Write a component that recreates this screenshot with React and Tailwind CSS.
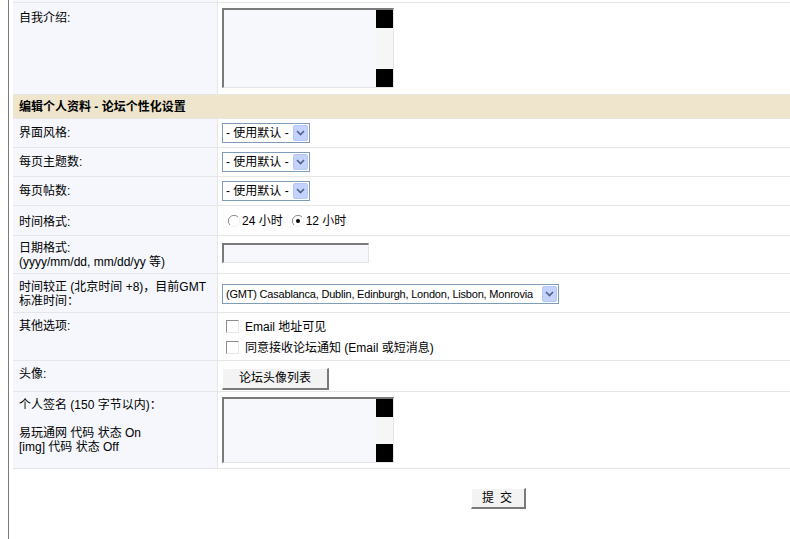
import React from 'react';

const font = { fontFamily: 'Tahoma, "Liberation Sans", "Noto Sans CJK SC", sans-serif' };

// === SMALL CLASSIC WIDGETS ===
const Select = ({ text, width, textClass = 'text-[12px]' }) => (
  <div className={`flex items-center h-[20px] border border-[#7f9db9] bg-white ${width}`}>
    <span className={`flex-1 min-w-0 overflow-hidden pl-[3px] whitespace-nowrap leading-none ${textClass}`}>{text}</span>
    <span className="flex items-center justify-center w-[15px] h-[16px] mr-[1px] rounded-[2px] bg-[#c3d3fd] border border-[#b4c8f6]">
      <svg width="9" height="6" viewBox="0 0 9 6">
        <path d="M1 1 L4.5 4.5 L8 1" fill="none" stroke="#4d6185" strokeWidth="1.6" />
      </svg>
    </span>
  </div>
);

const TextArea = ({ height }) => (
  <div className={`flex w-[172px] ${height} border-t-2 border-l-2 border-[#7a7a7a] border-b border-r border-b-[#e4e4e4] border-r-[#e4e4e4] bg-[#f7f8fc]`}>
    <div className="flex-1" />
    <div className="flex flex-col justify-between w-[17px] bg-[#f6f6f6]">
      <div className="h-[18px] bg-black" />
      <div className="h-[18px] bg-black" />
    </div>
  </div>
);

const Radio = ({ checked }) => (
  <svg width="12" height="12" viewBox="0 0 12 12" className="shrink-0">
    <circle cx="6" cy="6" r="5.5" fill="white" />
    <path d="M10 2 A5.5 5.5 0 0 0 2 10" fill="none" stroke="#8a8a8a" strokeWidth="1" />
    <path d="M2 10 A5.5 5.5 0 0 0 10 2" fill="none" stroke="#f0f0f0" strokeWidth="1" />
    {checked && <circle cx="6" cy="6" r="2" fill="#000" />}
  </svg>
);

const Checkbox = () => (
  <span className="inline-block w-[13px] h-[13px] shrink-0 bg-white border-t border-l border-[#8c8c8c] border-b border-r border-b-[#e8e8e8] border-r-[#e8e8e8]" />
);

const Row = ({ h, label, children, labelClass = 'pt-[8px]', cellClass = 'pt-[4px]' }) => (
  <div className={`grid grid-cols-[205px_1fr] border-b border-[#e6e6e6] ${h}`}>
    <div className={`bg-[#f5f7fc] border-r border-[#e6e6e6] pl-[6px] text-[12px] leading-[14px] ${labelClass}`}>{label}</div>
    <div className={`pl-[4px] ${cellClass}`}>{children}</div>
  </div>
);

export default function App() {
  return (
    <div className="w-[790px] h-[539px] overflow-hidden bg-white text-black" style={font}>
      <div className="flex h-full">
        <div className="w-[8px]" />
        <div className="w-[1px] bg-[#7b7b7b]" />
        <div className="w-[4px]" />
        <div className="flex-1 flex flex-col">
          {/* top strip from previous row */}
          <div className="grid grid-cols-[205px_1fr] h-[3px] border-b border-[#e6e6e6]">
            <div className="bg-[#f5f7fc] border-r border-[#e6e6e6]" />
            <div />
          </div>

          <Row h="h-[92px]" label="自我介绍:" cellClass="pt-[5px]">
            <TextArea height="h-[80px]" />
          </Row>

          {/* === SECTION HEADER === */}
          <div className="h-[24px] border-b border-[#e6e6e6] bg-[#eee5cc] flex items-center pl-[6px] text-[12px] font-bold">
            编辑个人资料 - 论坛个性化设置
          </div>

          <Row h="h-[29px]" label="界面风格:" labelClass="pt-[7px]">
            <Select text="- 使用默认 -" width="w-[88px]" />
          </Row>
          <Row h="h-[29px]" label="每页主题数:" labelClass="pt-[7px]">
            <Select text="- 使用默认 -" width="w-[88px]" />
          </Row>
          <Row h="h-[29px]" label="每页帖数:" labelClass="pt-[7px]">
            <Select text="- 使用默认 -" width="w-[88px]" />
          </Row>

          <Row h="h-[30px]" label="时间格式:" labelClass="pt-[9px]" cellClass="pt-[9px]">
            <div className="flex items-center text-[12px] leading-none">
              <span className="ml-[6px]"><Radio /></span>
              <span className="ml-[2px]">24 小时</span>
              <span className="ml-[9px]"><Radio checked /></span>
              <span className="ml-[2px]">12 小时</span>
            </div>
          </Row>

          <Row
            h="h-[38px]"
            label={
              <>
                日期格式:
                <br />
                (yyyy/mm/dd, mm/dd/yy 等)
              </>
            }
            labelClass="pt-[5px]"
            cellClass="pt-[7px]"
          >
            <div className="w-[147px] h-[20px] border-t-2 border-l-2 border-[#7a7a7a] border-b border-r border-b-[#e4e4e4] border-r-[#e4e4e4] bg-[#f7f8fc]" />
          </Row>

          <Row
            h="h-[39px]"
            label={
              <>
                时间较正 (北京时间 +8)，目前GMT
                <br />
                标准时间：
              </>
            }
            labelClass="pt-[6px]"
            cellClass="pt-[10px]"
          >
            <Select
              text="(GMT) Casablanca, Dublin, Edinburgh, London, Lisbon, Monrovia"
              width="w-[337px]"
              textClass="text-[11px] tracking-[-0.2px]"
            />
          </Row>

          <Row h="h-[48px]" label="其他选项:" labelClass="pt-[6px]" cellClass="pt-[7px]">
            <div className="flex flex-col gap-[8px] text-[12px] leading-none pl-[4px]">
              <div className="flex items-center gap-[6px]">
                <Checkbox />
                <span>Email 地址可见</span>
              </div>
              <div className="flex items-center gap-[6px]">
                <Checkbox />
                <span>同意接收论坛通知 (Email 或短消息)</span>
              </div>
            </div>
          </Row>

          <Row h="h-[31px]" label="头像:" labelClass="pt-[6px]" cellClass="pt-[4px]">
            <button className="w-[107px] h-[22px] bg-[#f3f3f3] border-t border-l border-white border-b-2 border-r-2 border-b-[#7a7a7a] border-r-[#7a7a7a] text-[12px] leading-none">
              论坛头像列表
            </button>
          </Row>

          <Row
            h="h-[77px]"
            label={
              <>
                个人签名 (150 字节以内)：
                <br />
                <br />
                易玩通网 代码 状态 On
                <br />
                [img] 代码 状态 Off
              </>
            }
            labelClass="pt-[6px]"
            cellClass="pt-[5px]"
          >
            <TextArea height="h-[66px]" />
          </Row>

          {/* === SUBMIT === */}
          <div className="pt-[16px] pl-[458px]">
            <button className="w-[55px] h-[21px] bg-[#f3f3f3] border-t border-l border-white border-b-2 border-r-2 border-b-[#7a7a7a] border-r-[#7a7a7a] text-[12px] leading-none tracking-[6px] pl-[4px]">
              提交
            </button>
          </div>
        </div>
      </div>
    </div>
  );
}
